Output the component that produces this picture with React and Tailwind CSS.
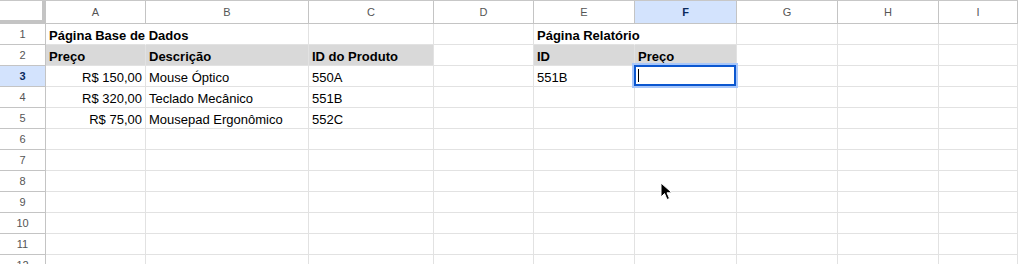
import React from "react";

const cols = ["A", "B", "C", "D", "E", "F", "G", "H", "I"];

const data = {
  1: { A: { t: "Página Base de Dados", b: true, nr: true }, E: { t: "Página Relatório", b: true, nr: true } },
  2: {
    A: { t: "Preço", b: true, g: true },
    B: { t: "Descrição", b: true, g: true },
    C: { t: "ID do Produto", b: true, g: true },
    E: { t: "ID", b: true, g: true },
    F: { t: "Preço", b: true, g: true },
  },
  3: { A: { t: "R$ 150,00", r: true }, B: { t: "Mouse Óptico" }, C: { t: "550A" }, E: { t: "551B" } },
  4: { A: { t: "R$ 320,00", r: true }, B: { t: "Teclado Mecânico" }, C: { t: "551B" } },
  5: { A: { t: "R$ 75,00", r: true }, B: { t: "Mousepad Ergonômico" }, C: { t: "552C" } },
};

const gridCols = "grid grid-cols-[46px_100px_163px_125px_100px_101px_102px_101px_101px_1fr]";

function Cell({ row, col }) {
  const c = (data[row] || {})[col];
  const selected = row === 3 && col === "F";
  return (
    <div
      className={
        "relative h-[21px] border-b border-[#e2e2e2] px-[3px] flex items-center whitespace-nowrap text-[13px] text-black " +
        (c && c.nr ? "border-r border-r-white " : "border-r ") +
        (c && c.g ? "bg-[#d9d9d9] " : "bg-white ") +
        (c && c.b ? "font-bold " : "") +
        (c && c.r ? "justify-end " : "")
      }
    >
      {c ? <span className="relative z-10 leading-none pt-[2px]">{c.t}</span> : null}
      {selected ? (
        <div className="absolute -top-[1px] -left-[1px] right-0 bottom-0 border-2 border-[#0b57d0] shadow-[0_0_0_2px_#a8c7fa] z-20">
          <div className="absolute left-[2px] top-[2px] w-[1px] h-[13px] bg-black" />
        </div>
      ) : null}
    </div>
  );
}

export default function App() {
  const rows = [1, 2, 3, 4, 5, 6, 7, 8, 9, 10, 11, 12];
  return (
    <div className="relative w-[1018px] h-[264px] overflow-hidden bg-white font-['Liberation_Sans',Arial,sans-serif] border-t border-[#c7c7c7]">
      <div className={gridCols + " h-[23px]"}>
        <div className="bg-white border-r-[4px] border-b-[4px] border-[#c4c4c4]" />
        {cols.map((c) => (
          <div
            key={c}
            className={
              "flex items-center justify-center border-r border-b border-[#c4c4c4] text-[11px] pt-[1px] " +
              (c === "F" ? "bg-[#d3e3fd] text-[#0b2a5c] font-bold" : "bg-white text-[#555]")
            }
          >
            {c}
          </div>
        ))}
      </div>
      {rows.map((r) => (
        <div key={r} className={gridCols}>
          <div
            className={
              "h-[21px] flex items-center justify-center border-r border-b border-[#c4c4c4] text-[11px] pt-[1px] " +
              (r === 3 ? "bg-[#d3e3fd] text-[#0b2a5c] font-bold" : "bg-white text-[#555]")
            }
          >
            {r}
          </div>
          {cols.map((c) => (
            <Cell key={c} row={r} col={c} />
          ))}
        </div>
      ))}
      <svg className="absolute left-[660px] top-[181px]" width="14" height="20" viewBox="0 0 14 20">
        <path d="M1 1 L1 15 L4.5 11.5 L7 17.5 L9.5 16.5 L7 10.8 L12 10.8 Z" fill="#000" stroke="#fff" strokeWidth="1" strokeLinejoin="round" />
      </svg>
    </div>
  );
}
